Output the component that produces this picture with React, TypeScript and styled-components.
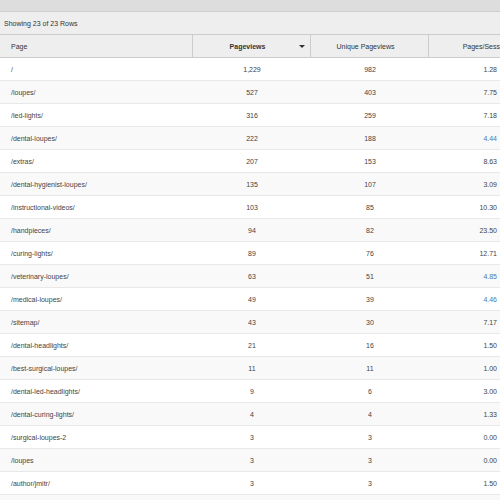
import React from "react";
import styled, { createGlobalStyle } from "styled-components";

const Global = createGlobalStyle`
  html, body { margin: 0; padding: 0; background: #ffffff; }
  body { font-family: "Liberation Sans", Arial, sans-serif; }
`;

const Page = styled.div`
  width: 500px;
  height: 500px;
  overflow: hidden;
  background: #ffffff;
`;

const TopBar = styled.div`
  height: 11px;
  background: #dddddd;
  border-bottom: 1px solid #cfcfcf;
`;

const InfoBar = styled.div`
  height: 22px;
  display: flex;
  align-items: center;
  padding-left: 4px;
  background: #eeeeee;
  border-bottom: 1px solid #cccccc;
  font-size: 7px;
  color: #333333;
`;

const Table = styled.div`
  width: 551px;
`;

const HeaderRow = styled.div`
  display: grid;
  grid-template-columns: 193px 118px 118px 122px;
  height: 22px;
  background: #eeeeee;
  border-bottom: 1px solid #cccccc;
`;

const HeadCell = styled.div<{ $align?: "left" | "center"; $bold?: boolean }>`
  position: relative;
  display: flex;
  align-items: center;
  justify-content: ${(p) => (p.$align === "left" ? "flex-start" : "center")};
  padding: ${(p) => (p.$align === "left" ? "0 0 0 11px" : "0 8px 0 0")};
  border-right: 1px solid #cccccc;
  font-size: 7px;
  font-weight: ${(p) => (p.$bold ? 700 : 400)};
  color: #333333;
  white-space: nowrap;
  &:last-child { border-right: none; }
`;

const SortArrow = styled.span`
  position: absolute;
  right: 5px;
  top: 10px;
  width: 0;
  height: 0;
  border-left: 3px solid transparent;
  border-right: 3px solid transparent;
  border-top: 3px solid #333333;
`;

const Row = styled.div<{ $alt: boolean }>`
  display: grid;
  grid-template-columns: 193px 118px 118px 122px;
  height: 22px;
  background: ${(p) => (p.$alt ? "#f9f9f9" : "#ffffff")};
  border-bottom: 1px solid #e8e8e8;
`;

const Cell = styled.div<{ $align: "left" | "center" | "right"; $blue?: boolean }>`
  display: flex;
  align-items: center;
  justify-content: ${(p) =>
    p.$align === "left" ? "flex-start" : p.$align === "center" ? "center" : "flex-end"};
  padding: ${(p) =>
    p.$align === "left" ? "0 0 0 11px" : p.$align === "right" ? "0 54px 0 0" : "0"};
  font-size: 7px;
  color: ${(p) => (p.$blue ? "#4f78a8" : "#444444")};
  white-space: nowrap;
`;

const rows: [string, string, string, string, boolean?][] = [
  ["/", "1,229", "982", "1.28"],
  ["/loupes/", "527", "403", "7.75"],
  ["/led-lights/", "316", "259", "7.18"],
  ["/dental-loupes/", "222", "188", "4.44", true],
  ["/extras/", "207", "153", "8.63"],
  ["/dental-hygienist-loupes/", "135", "107", "3.09"],
  ["/instructional-videos/", "103", "85", "10.30"],
  ["/handpieces/", "94", "82", "23.50"],
  ["/curing-lights/", "89", "76", "12.71"],
  ["/veterinary-loupes/", "63", "51", "4.85", true],
  ["/medical-loupes/", "49", "39", "4.46", true],
  ["/sitemap/", "43", "30", "7.17"],
  ["/dental-headlights/", "21", "16", "1.50"],
  ["/best-surgical-loupes/", "11", "11", "1.00"],
  ["/dental-led-headlights/", "9", "6", "3.00"],
  ["/dental-curing-lights/", "4", "4", "1.33"],
  ["/surgical-loupes-2", "3", "3", "0.00"],
  ["/loupes", "3", "3", "0.00"],
  ["/author/jmitr/", "3", "3", "1.50"],
];

export default function App() {
  return (
    <Page>
      <Global />
      <TopBar />
      <InfoBar>Showing 23 of 23 Rows</InfoBar>
      <Table>
        <HeaderRow>
          <HeadCell $align="left">Page</HeadCell>
          <HeadCell $bold>
            Pageviews
            <SortArrow />
          </HeadCell>
          <HeadCell>Unique Pageviews</HeadCell>
          <HeadCell>Pages/Session</HeadCell>
        </HeaderRow>
        {rows.map((r, i) => (
          <Row key={i} $alt={i % 2 === 1}>
            <Cell $align="left">{r[0]}</Cell>
            <Cell $align="center">{r[1]}</Cell>
            <Cell $align="center">{r[2]}</Cell>
            <Cell $align="right" $blue={r[4]}>{r[3]}</Cell>
          </Row>
        ))}
        <Row $alt={true} />
      </Table>
    </Page>
  );
}
